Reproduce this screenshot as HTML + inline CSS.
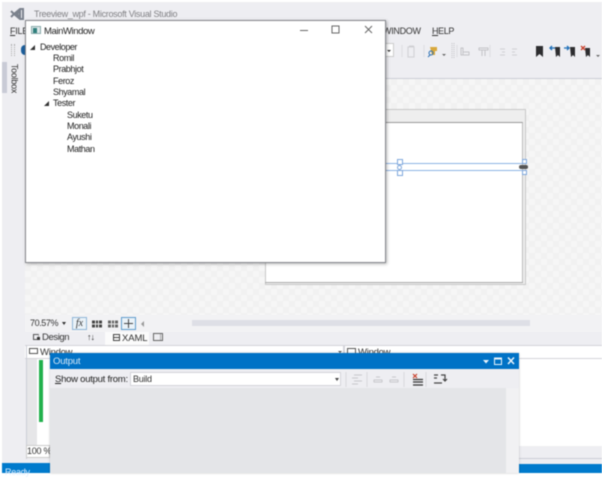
<!DOCTYPE html>
<html><head><meta charset="utf-8"><style>
html,body{margin:0;padding:0}
body{width:602px;height:473px;overflow:hidden;position:relative;background:#fff;font-family:"Liberation Sans",sans-serif;color:#222}
.a{position:absolute}
.t{position:absolute;white-space:nowrap;font-size:9px;line-height:11px;letter-spacing:-.25px}
#root{position:absolute;left:0;top:0;width:602px;height:473px;filter:blur(.5px)}
</style></head><body><div id="root">
<div class="a" style="left:2px;top:2px;width:600px;height:471px;background:#eeeef2"></div>

<svg class="a" style="left:9px;top:6px" width="18" height="16" viewBox="0 0 18 16"><path d="M2 5l3 3-3 3M5 8l6-5h3v10h-3L5 8zM11 5v6l-3-3z" fill="none" stroke="#7b828d" stroke-width="2"/></svg>
<div class="t" style="left:34px;top:9px;color:#808084;font-size:9px;letter-spacing:-.3px">Treeview_wpf - Microsoft Visual Studio</div>
<div class="t" style="left:10px;top:26px;font-size:9px;color:#333"><u>F</u>ILE</div>
<div class="t" style="left:383px;top:26px;font-size:9px;color:#333;letter-spacing:-.3px">WINDOW</div>
<div class="t" style="left:432px;top:26px;font-size:9px;color:#333;letter-spacing:-.4px"><u>H</u>ELP</div>
<div class="a" style="left:11px;top:44px;width:2px;height:12px;border-left:1px dotted #aaa;border-right:1px dotted #aaa"></div>
<div class="a" style="left:21px;top:45px;width:4px;height:10px;background:#1c5f9c;border-radius:4px 0 0 4px"></div>

<div class="a" style="left:385px;top:43px;width:9px;height:14px;background:#fff;border:1px solid #ccc;border-left:0;box-sizing:border-box;font-size:0"><div class="a" style="left:2px;top:6px;border:2px solid transparent;border-top:2px solid #333"></div></div>
<svg class="a" style="left:400px;top:40px" width="202" height="20" viewBox="0 0 202 20">
<path d="M2 5v12M24 5v12M57 5v12M90 5v12" stroke="#dcdce0" fill="none"/>
<path d="M8 7h6v10h-6zM9 6h5" stroke="#d0d0d4" fill="none"/>
<path d="M30 7h7v4h-2v4h-3z" fill="#d8a83c"/><circle cx="31" cy="13" r="2" fill="none" stroke="#2a6fb4"/><path d="M30 15l-2 2" stroke="#2a6fb4"/>
<path d="M42 14h4l-2 2z" fill="#666"/>
<path d="M52 3v16M54 3v16" stroke="#c4c4c8" stroke-dasharray="1 1"/>
<path d="M61 8h2v7h-2zM63 12h6v3h-6z" fill="none" stroke="#c4c4c8"/>
<path d="M79 8h9v2h-9zM82 10v6M85 10v6" fill="none" stroke="#c4c4c8"/>
<path d="M100 9h5M102 12h3M100 15h5" stroke="#d0d0d4"/>
<path d="M112 9h5M112 12h3M112 15h5" stroke="#d0d0d4"/>
<path d="M136 6h7v11l-3.500-3-3.500 3z" fill="#2d2d30"/>
<path d="M155 7h5v10l-2-2-2 2z" fill="#2d2d30"/><path d="M150 8h5M152 6l-2 2 2 2" stroke="#1e6fb8" fill="none" stroke-width="1.300"/>
<path d="M170 7h5v10l-2-2-2 2z" fill="#2d2d30"/><path d="M164 8h5M167 6l2 2-2 2" stroke="#1e6fb8" fill="none" stroke-width="1.300"/>
<path d="M185 8h5v9l-2-2-2 2z" fill="#2d2d30"/><path d="M181 6l4 4M185 6l-4 4" stroke="#c8402c" stroke-width="1.300"/>
<path d="M196 15h4l-2 2z" fill="#666"/>
</svg>

<div class="a" style="left:2px;top:62px;width:5px;height:31px;background:#c9cbd6"></div>
<div class="t" style="left:-4px;top:73px;width:36px;text-align:center;transform:rotate(90deg);font-size:9px;color:#333">Toolbox</div>

<div class="a" style="left:25px;top:78px;width:577px;height:1px;background:#ccced6"></div>
<div class="a" style="left:25px;top:79px;width:577px;height:236px;background-color:#f6f6f6;background-image:linear-gradient(45deg,#f1f1f1 25%,transparent 25%,transparent 75%,#f1f1f1 75%),linear-gradient(45deg,#f1f1f1 25%,transparent 25%,transparent 75%,#f1f1f1 75%);background-size:12px 12px;background-position:0 0,6px 6px"></div>

<div class="a" style="left:265px;top:109px;width:261px;height:176px;background:#eeeeee;border:1px solid #c8c8c8;box-sizing:border-box"></div>
<div class="a" style="left:266px;top:122px;width:257px;height:161px;background:#fff;border-top:1px solid #999;border-right:1px solid #bbb;box-sizing:border-box"></div>
<div class="a" style="left:265px;top:282px;width:258px;height:1px;background:#aaa"></div>
<div class="a" style="left:385px;top:163px;width:140px;height:8px;box-sizing:border-box;border-top:1px solid #8db3e4;border-bottom:1px solid #8db3e4"></div>
<div class="a" style="left:397px;top:159px;width:4px;height:4px;border:1px solid #7fa8dc;background:#fff"></div>
<div class="a" style="left:397px;top:165px;width:3px;height:3px;border:1px solid #7fa8dc;border-radius:50%;background:#fff"></div>
<div class="a" style="left:397px;top:170px;width:4px;height:4px;border:1px solid #7fa8dc;background:#fff"></div>
<div class="a" style="left:522px;top:159px;width:3px;height:3px;border:1px solid #7fa8dc;background:#fff"></div>
<div class="a" style="left:522px;top:170px;width:3px;height:3px;border:1px solid #7fa8dc;background:#fff"></div>
<div class="a" style="left:519px;top:165px;width:9px;height:4px;background:#555;border-radius:2px"></div>

<div class="a" style="left:25px;top:20px;width:361px;height:243px;background:#fff;box-sizing:border-box;border:1px solid #85878c;box-shadow:1px 1px 3px rgba(0,0,0,.3)"></div>
<div class="a" style="left:31px;top:26px;width:10px;height:8px;background:#dfe8ea;border:1px solid #8aa;box-sizing:border-box"></div>
<div class="a" style="left:33px;top:28px;width:4px;height:5px;background:#2f7f7c"></div>
<div class="t" style="left:44px;top:26px;font-size:9.500px;letter-spacing:-.4px;color:#222">MainWindow</div>
<svg class="a" style="left:295px;top:22px" width="85" height="16" viewBox="0 0 85 16"><path d="M5 8.500h8" stroke="#666"/><rect x="37" y="4" width="7" height="7" fill="none" stroke="#666"/><path d="M70 4l7 7M77 4l-7 7" stroke="#666"/></svg>

<div class="a" style="left:30px;top:45px;width:0;height:0;border-style:solid;border-width:0 0 5px 5px;border-color:transparent transparent #333 transparent"></div>
<div class="t" style="left:40px;top:42px;letter-spacing:-.45px">Developer</div>
<div class="t" style="left:53px;top:53px;letter-spacing:-.4px">Romil</div>
<div class="t" style="left:53px;top:64px;letter-spacing:-.4px">Prabhjot</div>
<div class="t" style="left:53px;top:76px;letter-spacing:-.4px">Feroz</div>
<div class="t" style="left:53px;top:87px;letter-spacing:-.4px">Shyamal</div>
<div class="a" style="left:44px;top:101px;width:0;height:0;border-style:solid;border-width:0 0 5px 5px;border-color:transparent transparent #333 transparent"></div>
<div class="t" style="left:53px;top:98px;letter-spacing:-.4px">Tester</div>
<div class="t" style="left:67px;top:110px;letter-spacing:-.4px">Suketu</div>
<div class="t" style="left:67px;top:121px;letter-spacing:-.4px">Monali</div>
<div class="t" style="left:67px;top:132px;letter-spacing:-.4px">Ayushi</div>
<div class="t" style="left:67px;top:144px;letter-spacing:-.4px">Mathan</div>

<div class="a" style="left:25px;top:315px;width:577px;height:17px;background:#f2f2f4"></div>
<div class="t" style="left:30px;top:318px;color:#333;letter-spacing:-.4px">70.57%</div>
<div class="a" style="left:62px;top:322px;border:2.500px solid transparent;border-top:3px solid #333"></div>
<div class="a" style="left:72px;top:317px;width:15px;height:13px;box-sizing:border-box;border:1px solid #8fb6d8;background:#eaf2f8;font:italic 10px/11px 'Liberation Serif',serif;text-align:center;color:#333">fx</div>
<svg class="a" style="left:90px;top:317px" width="60" height="14" viewBox="0 0 60 14"><path d="M2 3.500h10v7h-10z" fill="#444"/><path d="M5.500 3v8M8.500 3v8M2 7h10" stroke="#eee"/><path d="M18 3.500h10v7h-10z" fill="#666"/><path d="M21.500 3v8M24.500 3v8M18 7h10" stroke="#eee"/><rect x="31.500" y=".5" width="14" height="12" fill="#eaf2f8" stroke="#5f9ccc"/><path d="M38.500 2v9M34 6.500h9" stroke="#444"/><path d="M54 4v6l-3-3z" fill="#999"/></svg>
<div class="a" style="left:192px;top:320px;width:338px;height:6px;background:#dedfe6"></div>

<div class="a" style="left:25px;top:332px;width:577px;height:13px;background:#eeeef2"></div>
<div class="a" style="left:105px;top:332px;width:44px;height:13px;background:#fbfbfb"></div>
<div class="a" style="left:33px;top:334px;width:6px;height:6px;border:1px solid #555;border-right-color:#aaa;box-sizing:border-box"></div>
<div class="a" style="left:37px;top:337px;width:3px;height:3px;background:#333"></div>
<div class="t" style="left:42px;top:332px;font-size:9.500px;color:#333;letter-spacing:-.4px">Design</div>
<div class="t" style="left:87px;top:332px;font-size:9px;color:#333;letter-spacing:-1px;font-weight:bold">↑↓</div>
<div class="a" style="left:113px;top:334px;width:7px;height:7px;border:1px solid #444;box-sizing:border-box;background:linear-gradient(#444,#444) 0 2px/100% 1px no-repeat"></div>
<div class="t" style="left:122px;top:333px;font-size:9.500px;color:#333;letter-spacing:-.1px">XAML</div>
<div class="a" style="left:153px;top:333px;width:10px;height:8px;border:1px solid #666;box-sizing:border-box;background:linear-gradient(#aaa,#aaa) 6px 0/1px 100% no-repeat"></div>

<div class="a" style="left:25px;top:345px;width:577px;height:14px;background:#fff;border-top:1px solid #d4d4da;border-bottom:1px solid #d4d4da;box-sizing:border-box"></div>
<div class="a" style="left:26px;top:345px;width:1px;height:114px;background:#ccced6"></div>
<div class="a" style="left:29px;top:348px;width:9px;height:6px;border:1px solid #555;box-sizing:border-box"></div>
<div class="t" style="left:40px;top:347px;font-size:9.500px;color:#333">Window</div>
<div class="a" style="left:338px;top:351px;border:2px solid transparent;border-top:2px solid #555"></div>
<div class="a" style="left:343px;top:345px;width:2px;height:14px;background:#d4d4da"></div>
<div class="a" style="left:347px;top:348px;width:9px;height:6px;border:1px solid #555;box-sizing:border-box"></div>
<div class="t" style="left:358px;top:347px;font-size:9.500px;color:#333">Window</div>

<div class="a" style="left:27px;top:359px;width:10px;height:86px;background:#e6e6e8"></div>
<div class="a" style="left:37px;top:359px;width:13px;height:86px;background:#fff"></div>
<div class="a" style="left:39px;top:360px;width:4px;height:62px;background:#22b14c"></div>
<div class="a" style="left:26px;top:445px;width:24px;height:13px;background:#fff;border:1px solid #ccc;box-sizing:border-box"></div>
<div class="t" style="left:27px;top:446px;color:#333">100 %</div>
<div class="a" style="left:519px;top:359px;width:83px;height:87px;background:#fff"></div>
<div class="a" style="left:519px;top:458px;width:83px;height:1px;background:#ccced6"></div>
<div class="a" style="left:2px;top:463px;width:48px;height:10px;background:#007acc"></div>
<div class="t" style="left:5px;top:467px;color:#dfefff">Ready</div>
<div class="a" style="left:519px;top:464px;width:83px;height:9px;background:#007acc"></div>

<div class="a" style="left:50px;top:353px;width:469px;height:120px;background:#eeeef2;box-shadow:0 0 2px rgba(0,0,0,.25)"></div>
<div class="a" style="left:50px;top:353px;width:469px;height:16px;background:#0072c6"></div>
<div class="t" style="left:53px;top:356px;font-size:9.500px;color:#d6e8f6;letter-spacing:-.2px">Output</div>
<svg class="a" style="left:480px;top:354px" width="38" height="14" viewBox="0 0 38 14"><path d="M3 6h6l-3 3.500z" fill="#eaf4fb"/><rect x="14.500" y="4" width="7" height="6.500" fill="none" stroke="#eaf4fb"/><path d="M14 4.500h8" stroke="#eaf4fb" stroke-width="2"/><path d="M28 3.500l6 6.500M34 3.500l-6 6.500" stroke="#eaf4fb" stroke-width="1.500"/></svg>
<div class="t" style="left:55px;top:374px;font-size:9.500px;color:#222;letter-spacing:-.25px"><u>S</u>how output from:</div>
<div class="a" style="left:130px;top:372px;width:211px;height:14px;background:#fff;border:1px solid #d4d4da;box-sizing:border-box"></div>
<div class="t" style="left:133px;top:374px;color:#333">Build</div>
<div class="a" style="left:335px;top:378px;border:2px solid transparent;border-top:3px solid #444"></div>
<svg class="a" style="left:344px;top:370px" width="105" height="18" viewBox="0 0 105 18">
<path d="M2 2v15M23 2v15M60 2v15M82 2v15" stroke="#d8d8dc"/>
<path d="M10 5h8M8 8h6M10 11h8M8 14h6M32 7h4M30 10h8v2h-8zM48 7h4M46 10h8v2h-8z" stroke="#c8c8cc" fill="none"/>
<path d="M69 4l4 4M73 4l-4 4" stroke="#c8402c" stroke-width="1.200"/><path d="M69 9.500h10M69 12h10M69 15h10" stroke="#333" stroke-width="1.200"/>
<path d="M90 5h4M90 8h3M97 5h4v6M99 9l2 2 2-2M90 13h4M98 13h-4" stroke="#444" fill="none" stroke-width="1.200"/>
</svg>
<div class="a" style="left:50px;top:388px;width:456px;height:85px;background:#e4e5e8"></div>
<div class="a" style="left:506px;top:388px;width:13px;height:85px;background:#f1f1f3"></div>
</div></body></html>
